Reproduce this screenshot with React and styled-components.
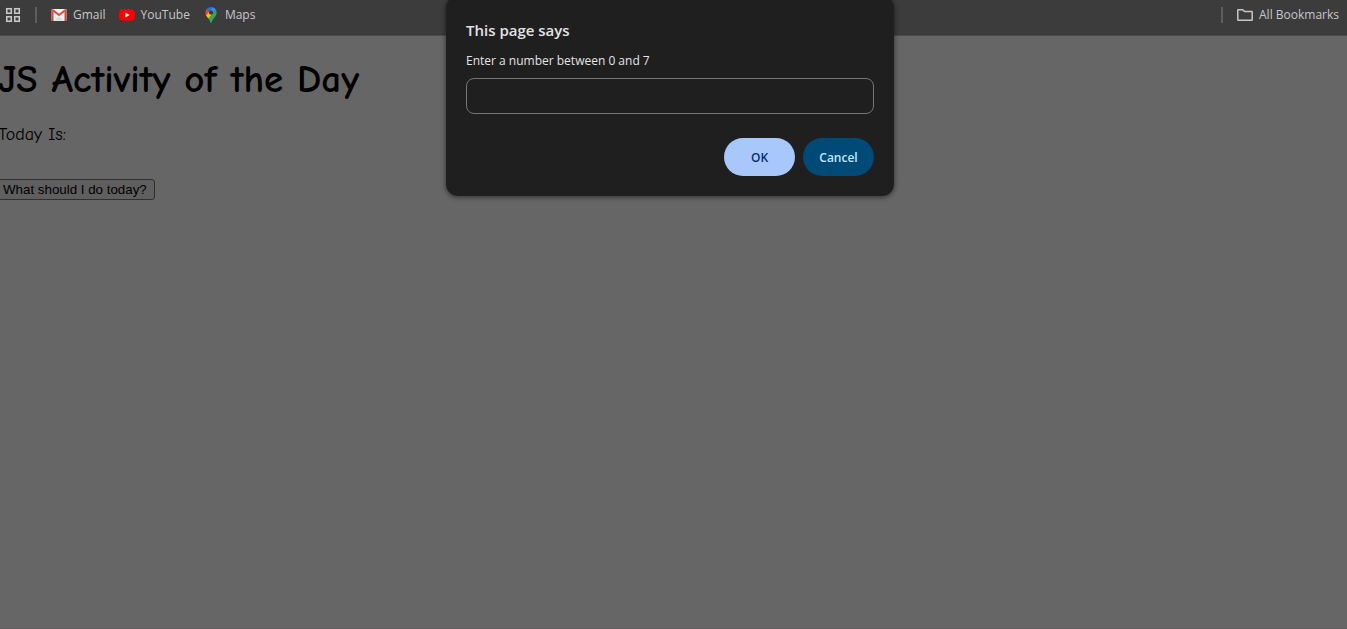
import React from "react";
import styled, { createGlobalStyle } from "styled-components";

const GlobalStyle = createGlobalStyle`
  * { box-sizing: border-box; }
  body {
    margin: 0;
    background: #666666;
    overflow-x: hidden;
  }
`;

const uiFont = `"Segoe UI", "Open Sans", "Noto Sans", sans-serif`;
const comicFont = `"Comic Sans MS", "Comic Neue", "DejaVu Sans", sans-serif`;

const Screen = styled.div`
  position: relative;
  display: flex;
  flex-direction: column;
  min-height: 100vh;
  background: #666666;
  border-bottom: 1px solid #605e5e;
`;

const BookmarksBar = styled.nav`
  display: flex;
  align-items: flex-start;
  justify-content: space-between;
  height: 36px;
  padding: 5px 8px 0 5px;
  background: #3c3c3c;
  border-bottom: 1px solid #4c4c4c;
`;

const BarGroup = styled.div`
  display: flex;
  align-items: center;
  height: 20px;
`;

const IconButton = styled.button`
  display: flex;
  padding: 0;
  border: 0;
  background: none;
  color: #c7c7c7;
`;

const Divider = styled.span`
  width: 2px;
  height: 16px;
  margin: 0 14px;
  background: #5e5e5e;
`;

const Bookmark = styled.a`
  display: flex;
  align-items: center;
  gap: 6px;
  margin-right: ${(p) => (p.$last ? 0 : 13)}px;
  color: #c7c7c7;
  font: 12px/20px ${uiFont};
  text-decoration: none;
  white-space: nowrap;
  svg { flex: none; }
`;

const Content = styled.main`
  display: flex;
  flex-direction: column;
  align-items: flex-start;
  margin-left: -2px;
  padding-top: 20px;
  color: #000;
`;

const Title = styled.h1`
  margin: 0;
  font: bold 39px/48px ${comicFont};
  white-space: nowrap;
`;

const Today = styled.p`
  margin: 19px 0 32px;
  font: 18px/24px ${comicFont};
`;

const PageButton = styled.button`
  height: 21px;
  padding: 0 7px 0 4px;
  border: 1px solid #303030;
  border-radius: 3px;
  background: #5f5f5f;
  color: #000;
  font-family: Arial, "Liberation Sans", sans-serif;
`;

const DialogLayer = styled.div`
  position: absolute;
  top: 0;
  left: 0;
  right: 0;
  display: flex;
  justify-content: center;
  padding-right: 7px;
`;

const Dialog = styled.form`
  display: flex;
  flex-direction: column;
  width: 448px;
  margin-top: -4px;
  padding: 24px 20px 20px;
  border-radius: 12px;
  background: #1f1f1f;
  box-shadow: 0 1px 4px 1px rgba(0, 0, 0, 0.4);
  font-family: ${uiFont};
`;

const DialogTitle = styled.h2`
  margin: 0;
  color: #e3e3e3;
  font-size: 15px;
  font-weight: 600;
  line-height: 20px;
`;

const DialogLabel = styled.label`
  padding: 11px 0 7px;
  color: #e3e3e3;
  font-size: 12px;
  line-height: 20px;
`;

const DialogInput = styled.input`
  width: 100%;
  height: 36px;
  padding: 0 10px;
  border: 1px solid #757575;
  border-radius: 8px;
  outline: none;
  background: transparent;
  color: #e3e3e3;
  font: 12px/20px ${uiFont};
`;

const Actions = styled.div`
  display: flex;
  justify-content: flex-end;
  gap: 8px;
  margin-top: 24px;
`;

const ActionButton = styled.button`
  width: 71px;
  height: 38px;
  padding: 2px 0 0;
  border: 0;
  border-radius: 19px;
  background: ${(p) => (p.$primary ? "#a8c7fa" : "#004a77")};
  color: ${(p) => (p.$primary ? "#062e6f" : "#c2e7ff")};
  font: 600 12px/20px ${uiFont};
`;

const AppsIcon = () => (
  <svg width="16" height="16" viewBox="0 0 16 16" fill="none" stroke="currentColor" strokeWidth="1.6" aria-hidden="true">
    <rect x="1.75" y="1.75" width="4.5" height="4.5" />
    <rect x="9.75" y="1.75" width="4.5" height="4.5" />
    <rect x="1.75" y="9.75" width="4.5" height="4.5" />
    <rect x="9.75" y="9.75" width="4.5" height="4.5" />
  </svg>
);

const GmailIcon = () => (
  <svg width="16" height="16" viewBox="0 0 16 16" aria-hidden="true">
    <rect x="0.5" y="2" width="15" height="12" rx="1" fill="#f0f0f0" />
    <path d="M3 13.8 8 9.6l5 4.2z" fill="#dcdcdc" />
    <path d="M.5 3v10.2q0 .8.8.8H2.500V5zM15.500 3v10.200q0 .8-.8.8H13.500V5z" fill="#d5483c" />
    <path d="M1.200 2.800 8 8l6.800-5.200" fill="none" stroke="#dd4b3e" strokeWidth="2" strokeLinejoin="round" />
  </svg>
);

const YouTubeIcon = () => (
  <svg width="16" height="16" viewBox="0 0 16 16" aria-hidden="true">
    <path d="M2.500 2.600Q8 2 13.500 2.600q2 .2 2.300 2.200.4 3.200 0 6.400-.3 2-2.300 2.200-5.500.6-11 0-2-.2-2.300-2.200-.4-3.200 0-6.400.3-2 2.300-2.200z" fill="#ff0000" />
    <path d="M6.400 5.600v4.800L10.500 8z" fill="#fff" />
  </svg>
);

const MapsIcon = () => (
  <svg width="16" height="16" viewBox="0 0 92.300 132.300" aria-hidden="true">
    <path fill="#1a73e8" d="M60.200 2.200C55.800.8 51 0 46.100 0 32 0 19.300 6.400 10.800 16.500l21.800 18.300z" />
    <path fill="#ea4335" d="M10.800 16.500C4.100 24.500 0 34.900 0 46.100c0 8.700 1.700 15.700 4.600 22l28-33.300z" />
    <path fill="#4285f4" d="M46.200 28.500c9.800 0 17.700 7.900 17.700 17.700 0 4.300-1.600 8.300-4.200 11.400 0 0 13.900-16.600 27.500-32.700-5.600-10.800-15.300-19-27-22.700L32.600 34.800c3.300-3.800 8.100-6.300 13.600-6.300" />
    <path fill="#fbbc04" d="M46.200 63.800c-9.800 0-17.700-7.900-17.700-17.700 0-4.300 1.500-8.300 4.100-11.300l-28 33.300c4.800 10.600 12.800 19.200 21 29.900l34.100-40.500c-3.300 3.900-8.100 6.300-13.500 6.300" />
    <path fill="#34a853" d="M59.100 109.200c15.400-24.100 33.300-35 33.300-63 0-7.700-1.900-14.900-5.200-21.300L25.600 98c2.600 3.400 5.300 7.300 7.900 11.300 9.400 14.500 6.800 23.100 12.800 23.100s3.400-8.700 12.800-23.200" />
  </svg>
);

const FolderIcon = () => (
  <svg width="16" height="16" viewBox="0 0 16 16" fill="none" stroke="currentColor" strokeWidth="1.500" strokeLinejoin="round" aria-hidden="true">
    <path d="M.8 12.700V3.300q0-.5.500-.5h4.500l1.700 1.700h7.200q.5 0 .5.500v7.700q0 .5-.5.500H1.300q-.5 0-.5-.5z" />
  </svg>
);

export default function App() {
  return (
    <>
      <GlobalStyle />
      <Screen>
        <BookmarksBar aria-label="Bookmarks">
          <BarGroup>
            <IconButton type="button" aria-label="Apps">
              <AppsIcon />
            </IconButton>
            <Divider />
            <Bookmark href="#gmail"><GmailIcon />Gmail</Bookmark>
            <Bookmark href="#youtube"><YouTubeIcon />YouTube</Bookmark>
            <Bookmark href="#maps"><MapsIcon />Maps</Bookmark>
          </BarGroup>
          <BarGroup>
            <Divider />
            <Bookmark href="#all" $last><FolderIcon />All Bookmarks</Bookmark>
          </BarGroup>
        </BookmarksBar>
        <Content>
          <Title>JS Activity of the Day</Title>
          <Today>Today Is:</Today>
          <PageButton type="button">What should I do today?</PageButton>
        </Content>
        <DialogLayer>
          <Dialog role="dialog" aria-labelledby="dialog-title" onSubmit={(e) => e.preventDefault()}>
            <DialogTitle id="dialog-title">This page says</DialogTitle>
            <DialogLabel htmlFor="answer">Enter a number between 0 and 7</DialogLabel>
            <DialogInput id="answer" type="text" autoComplete="off" />
            <Actions>
              <ActionButton type="submit" $primary>OK</ActionButton>
              <ActionButton type="button">Cancel</ActionButton>
            </Actions>
          </Dialog>
        </DialogLayer>
      </Screen>
    </>
  );
}
